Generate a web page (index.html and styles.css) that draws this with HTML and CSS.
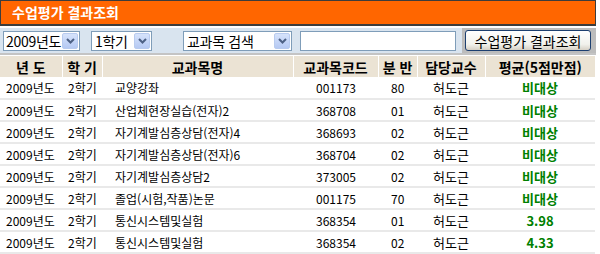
FILE: index.html
```html
<!DOCTYPE html>
<html lang="ko">
<head>
  <meta charset="UTF-8">
  <title>수업평가 결과조회</title>
  <link rel="stylesheet" href="styles.css">
</head>
<body>
  <div class="title-bar">수업평가 결과조회</div>

  <div class="toolbar">
    <div class="toolbar-fields">
      <div class="select sel-year"><span>2009년도</span><i class="arrow"><svg width="9" height="6" viewBox="0 0 9 6"><path d="M1 1 L4.5 4.5 L8 1" fill="none" stroke="#4d6185" stroke-width="2"/></svg></i></div>
      <div class="select sel-term"><span>1학기</span><i class="arrow"><svg width="9" height="6" viewBox="0 0 9 6"><path d="M1 1 L4.5 4.5 L8 1" fill="none" stroke="#4d6185" stroke-width="2"/></svg></i></div>
      <div class="select sel-search"><span>교과목 검색</span><i class="arrow"><svg width="9" height="6" viewBox="0 0 9 6"><path d="M1 1 L4.5 4.5 L8 1" fill="none" stroke="#4d6185" stroke-width="2"/></svg></i></div>
      <div class="text-input"></div>
    </div>
    <div class="toolbar-action">
      <button class="btn">수업평가 결과조회</button>
    </div>
  </div>

  <table class="result">
    <colgroup>
      <col style="width:62px"><col style="width:40px"><col style="width:191px"><col style="width:85px"><col style="width:39px"><col style="width:68px"><col style="width:110px">
    </colgroup>
    <thead>
      <tr>
        <th>년 도</th><th>학 기</th><th>교과목명</th><th>교과목코드</th><th>분 반</th><th>담당교수</th><th>평균(5점만점)</th>
      </tr>
    </thead>
    <tbody>
      <tr><td>2009년도</td><td>2학기</td><td class="name">교양강좌</td><td class="code">001173</td><td class="num">80</td><td class="prof">허도근</td><td class="score">비대상</td></tr>
      <tr><td>2009년도</td><td>2학기</td><td class="name">산업체현장실습(전자)2</td><td class="code">368708</td><td class="num">01</td><td class="prof">허도근</td><td class="score">비대상</td></tr>
      <tr><td>2009년도</td><td>2학기</td><td class="name">자기계발심층상담(전자)4</td><td class="code">368693</td><td class="num">02</td><td class="prof">허도근</td><td class="score">비대상</td></tr>
      <tr><td>2009년도</td><td>2학기</td><td class="name">자기계발심층상담(전자)6</td><td class="code">368704</td><td class="num">02</td><td class="prof">허도근</td><td class="score">비대상</td></tr>
      <tr><td>2009년도</td><td>2학기</td><td class="name">자기계발심층상담2</td><td class="code">373005</td><td class="num">02</td><td class="prof">허도근</td><td class="score">비대상</td></tr>
      <tr><td>2009년도</td><td>2학기</td><td class="name">졸업(시험,작품)논문</td><td class="code">001175</td><td class="num">70</td><td class="prof">허도근</td><td class="score">비대상</td></tr>
      <tr><td>2009년도</td><td>2학기</td><td class="name">통신시스템및실험</td><td class="code">368354</td><td class="num">01</td><td class="prof">허도근</td><td class="score">3.98</td></tr>
      <tr><td>2009년도</td><td>2학기</td><td class="name">통신시스템및실험</td><td class="code">368354</td><td class="num">02</td><td class="prof">허도근</td><td class="score">4.33</td></tr>
    </tbody>
  </table>
</body>
</html>
```

FILE: styles.css
```css
/* Base */
* {
  margin: 0;
  padding: 0;
  box-sizing: border-box;
}

body {
  width: 596px;
  background: #ffffff;
  color: #000000;
  font-family: "Noto Sans CJK KR", "Noto Sans", sans-serif;
  font-size: 12px;
}

/* Orange title bar */
.title-bar {
  height: 26px;
  background: #ff6600;
  border: 1px solid #3c3c3c;
  border-bottom-width: 2px;
  color: #ffffff;
  font-size: 14px;
  font-weight: bold;
  line-height: 22px;
  padding-left: 11px;
}

/* Search toolbar */
.toolbar {
  display: flex;
  margin-top: 2px;
  height: 27px;
  border-bottom: 2px solid #c4c4c4;
}

.toolbar-fields {
  flex: 1;
  display: flex;
  align-items: center;
  background: #d9e4ef;
  padding-left: 3px;
}

.toolbar-action {
  display: flex;
  align-items: center;
  background: #bcbcbc;
  padding: 0 5px 0 3px;
}

.select {
  display: flex;
  align-items: center;
  justify-content: space-between;
  height: 20px;
  background: #ffffff;
  border: 1px solid #7f9db9;
  padding: 0 1px 0 3px;
  font-size: 14px;
  white-space: nowrap;
}

.select span {
  letter-spacing: -0.3px;
}

.select .arrow {
  flex: none;
  display: flex;
  align-items: center;
  justify-content: center;
  width: 16px;
  height: 16px;
  background: linear-gradient(#d6e3fb, #b5c9f3);
  border: 1px solid #b8cbef;
  border-radius: 2px;
}

.sel-year { width: 77px; padding-left: 2px; }
.sel-term { width: 61px; margin-left: 11px; }
.sel-search { width: 109px; margin-left: 31px; }

.text-input {
  width: 156px;
  height: 20px;
  margin-left: 8px;
  background: #ffffff;
  border: 1px solid #7f9db9;
}

.btn {
  width: 126px;
  height: 21px;
  border: 1px solid #1c3f70;
  border-radius: 3px;
  background: linear-gradient(#ffffff, #f1f1ec 70%, #d6d0c5);
  font-family: "Noto Sans CJK KR", sans-serif;
  font-size: 14px;
  color: #000000;
}

/* Result table */
.result {
  width: 595px;
  margin-top: 1px;
  border-collapse: collapse;
  table-layout: fixed;
}

.result th {
  height: 21px;
  background: #ebe3d4;
  border-right: 1px solid #ffffff;
  font-size: 14px;
  font-weight: bold;
  text-align: center;
  white-space: nowrap;
}

.result th:last-child {
  border-right: none;
}

.result td {
  height: 22px;
  border-bottom: 2px solid #e9e9e9;
  padding-left: 6px;
  white-space: nowrap;
}

.result td.name { padding-left: 13px; }
.result td.code { padding-left: 23px; }
.result td.num { padding-left: 13px; }
.result td.prof { padding-left: 16px; font-size: 13px; }

.result td.score {
  padding-left: 0;
  text-align: center;
  color: #008000;
  font-weight: bold;
  font-size: 13px;
}
```
